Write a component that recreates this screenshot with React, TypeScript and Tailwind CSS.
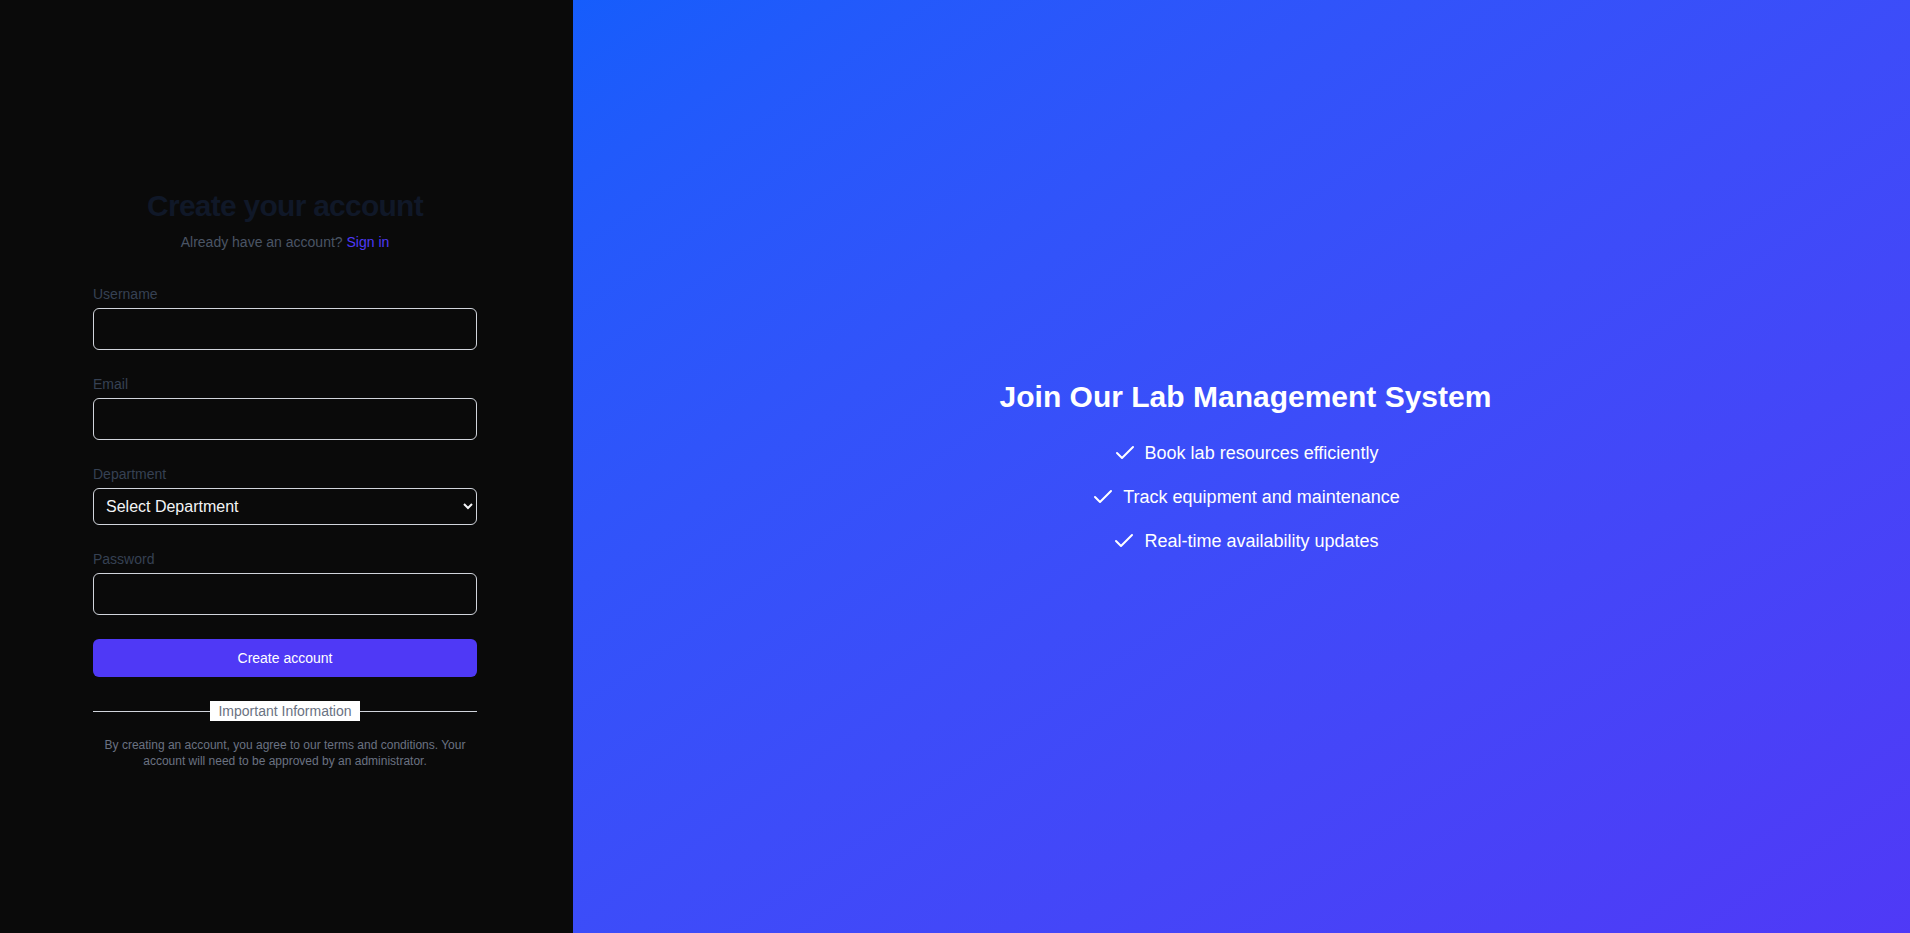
import { useState } from "react";
import { Check } from "lucide-react";

const features = [
  "Book lab resources efficiently",
  "Track equipment and maintenance",
  "Real-time availability updates",
];

export default function App() {
  const [department, setDepartment] = useState("");

  return (
    <div
      className="flex h-[933px] w-full"
      style={{ fontFamily: '"Liberation Sans", Arial, sans-serif' }}
    >
      {/* left: form */}
      <div className="flex w-[573px] shrink-0 flex-col justify-center bg-[#0a0a0a] pl-[21px] pr-6 pt-6">
        <div className="mx-auto w-full max-w-sm">
          <h2 className="text-center text-3xl font-extrabold tracking-tight text-gray-900">
            Create your account
          </h2>
          <p className="mt-2 text-center text-sm text-gray-600">
            Already have an account?{" "}
            <a href="#" className="text-indigo-600">
              Sign in
            </a>
          </p>

          <form className="mt-8 space-y-6" onSubmit={(e) => e.preventDefault()}>
            <div>
              <label className="block text-sm text-gray-700">Username</label>
              <input
                type="text"
                className="mt-1 block w-full rounded-md border border-gray-300 bg-transparent px-3 py-2.5 text-sm text-white outline-none"
              />
            </div>
            <div>
              <label className="block text-sm text-gray-700">Email</label>
              <input
                type="email"
                className="mt-1 block w-full rounded-md border border-gray-300 bg-transparent px-3 py-2.5 text-sm text-white outline-none"
              />
            </div>
            <div>
              <label className="block text-sm text-gray-700">Department</label>
              <select
                value={department}
                onChange={(e) => setDepartment(e.target.value)}
                className="mt-1 block h-[37px] w-full rounded-md border border-gray-300 bg-transparent pl-2 pr-1 text-base text-gray-100 outline-none [color-scheme:dark]"
              >
                <option value="">Select Department</option>
                <option value="physics">Physics</option>
                <option value="chemistry">Chemistry</option>
                <option value="biology">Biology</option>
              </select>
            </div>
            <div>
              <label className="block text-sm text-gray-700">Password</label>
              <input
                type="password"
                className="mt-1 block w-full rounded-md border border-gray-300 bg-transparent px-3 py-2.5 text-sm text-white outline-none"
              />
            </div>
            <button
              type="submit"
              className="flex w-full justify-center rounded-md border border-transparent bg-indigo-600 py-2 text-sm text-white"
            >
              Create account
            </button>
          </form>

          <div className="mt-6">
            <div className="relative flex items-center justify-center">
              <div className="absolute inset-x-0 top-1/2 border-t border-gray-300" />
              <span className="relative bg-white px-2 text-sm text-gray-500">
                Important Information
              </span>
            </div>
            <p className="mt-4 text-center text-xs text-gray-500">
              By creating an account, you agree to our terms and conditions. Your
              account will need to be approved by an administrator.
            </p>
          </div>
        </div>
      </div>

      {/* right: promo */}
      <div className="flex flex-1 items-center justify-center bg-gradient-to-br from-blue-600 to-indigo-600 pl-2">
        <div className="text-center text-white">
          <h1 className="text-3xl font-bold">Join Our Lab Management System</h1>
          <ul className="mt-6 space-y-4 text-lg">
            {features.map((f) => (
              <li key={f} className="flex items-center justify-center">
                <Check className="mr-2 h-6 w-6 shrink-0" />
                {f}
              </li>
            ))}
          </ul>
        </div>
      </div>
    </div>
  );
}
